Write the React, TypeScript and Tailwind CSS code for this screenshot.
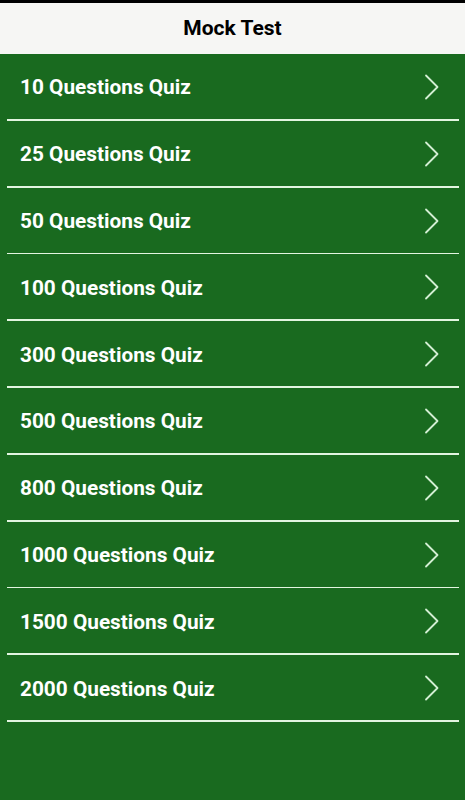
const quizzes = [10, 25, 50, 100, 300, 500, 800, 1000, 1500, 2000];

function Chevron() {
  return (
    <svg width="16" height="26" viewBox="0 0 16 26" fill="none" className="shrink-0">
      <path d="M2 1.5 L13.5 13 L2 24.5" stroke="#d3efd3" strokeWidth="1.8" strokeLinecap="round" strokeLinejoin="round" />
    </svg>
  );
}

export default function App() {
  return (
    <div className="w-[465px] h-[800px] flex flex-col bg-[#196a1f] font-['Roboto',sans-serif]">
      <div className="h-[3px] bg-black" />
      <div className="h-[51px] bg-[#f6f6f4] flex items-center justify-center">
        <h1 className="text-[21px] font-bold text-black">Mock Test</h1>
      </div>
      <div className="flex flex-col">
        {quizzes.map((n) => (
          <div key={n}>
            <div className="h-[65px] flex items-center justify-between pl-5 pr-[25px] pt-[1px]">
              <span className="text-[20.8px] font-bold text-white mt-[2px]">{n} Questions Quiz</span>
              <Chevron />
            </div>
            <div className="h-[1.8px] ml-[7px] mr-[6px] bg-[#e2f5e0]" />
          </div>
        ))}
      </div>
    </div>
  );
}
